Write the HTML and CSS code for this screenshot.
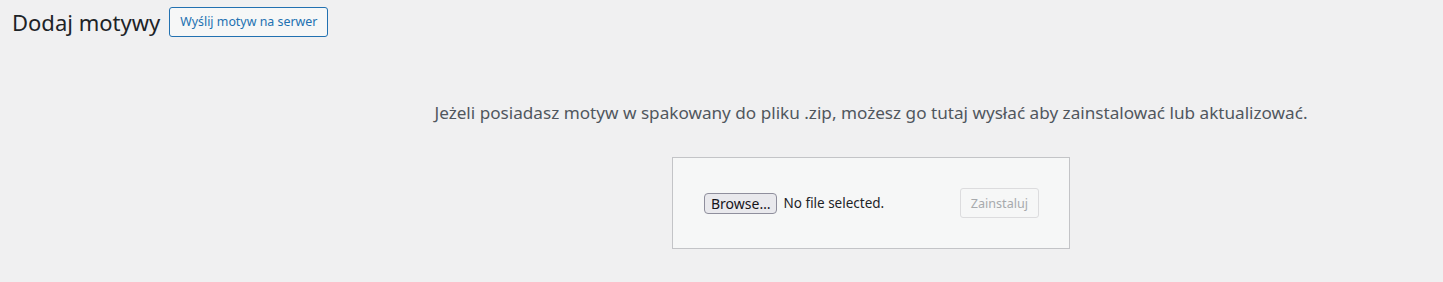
FILE: index.html
```html
<!DOCTYPE html>
<html lang="pl">
<head>
    <meta charset="UTF-8">
    <meta name="viewport" content="width=device-width, initial-scale=1.0">
    <title>Dodaj motywy</title>
    <link rel="stylesheet" href="styles.css">
</head>
<body>
    <div class="wrap">
        <div class="page-head">
            <h1>Dodaj motywy</h1>
            <button class="page-title-action">Wyślij motyw na serwer</button>
        </div>

        <div class="upload-theme">
            <p class="install-help">Jeżeli posiadasz motyw w spakowany do pliku .zip, możesz go tutaj wysłać aby zainstalować lub aktualizować.</p>
            <form class="upload-form">
                <label class="file-input">
                    <span class="browse">Browse…</span>
                    <span class="file-name">No file selected.</span>
                </label>
                <button class="install-button" disabled>Zainstaluj</button>
            </form>
        </div>
    </div>
</body>
</html>
```

FILE: styles.css
```css
body {
    font-family: "Noto Sans", "Open Sans", sans-serif;
    background-color: #f0f0f1;
    color: #3c434a;
    margin: 0;
    padding: 0;
}

.wrap {
    padding: 7px 0 0 12px;
}

.page-head {
    display: flex;
    align-items: center;
}

.page-head h1 {
    font-size: 22px;
    font-weight: 400;
    line-height: 30px;
    color: #1d2327;
    margin: 0 9px 0 0;
}

.page-title-action {
    font-family: inherit;
    font-size: 12.4px;
    line-height: 28px;
    height: 30px;
    padding: 0 10px;
    color: #2271b1;
    background-color: #f6f7f7;
    border: 1px solid #2271b1;
    border-radius: 3px;
    cursor: pointer;
}

.upload-theme {
    padding-left: 287px;
    text-align: center;
}

.install-help {
    font-size: 17.15px;
    color: #50575e;
    line-height: 24px;
    margin: 0;
    padding: 64px 0 0;
}

.upload-form {
    display: inline-flex;
    align-items: center;
    gap: 10px;
    margin-top: 32px;
    padding: 30px 30px 30px 31px;
    width: 335px;
    height: 30px;
    justify-content: space-between;
    background-color: #f6f7f7;
    border: 1px solid #c3c4c7;
}

.file-input {
    display: flex;
    align-items: center;
    gap: 6px;
    font-size: 13.5px;
    color: #1d2327;
}

.browse {
    display: inline-block;
    height: 19px;
    line-height: 19px;
    padding: 0 6px;
    font-size: 14px;
    background-color: #e9e9ed;
    border: 1px solid #8f8f9d;
    border-radius: 4px;
    color: #15141a;
}

.install-button {
    font-family: inherit;
    font-size: 12.6px;
    height: 30px;
    padding: 0 10px;
    color: #a7aaad;
    background-color: #f6f7f7;
    border: 1px solid #dcdcde;
    border-radius: 3px;
}
```
